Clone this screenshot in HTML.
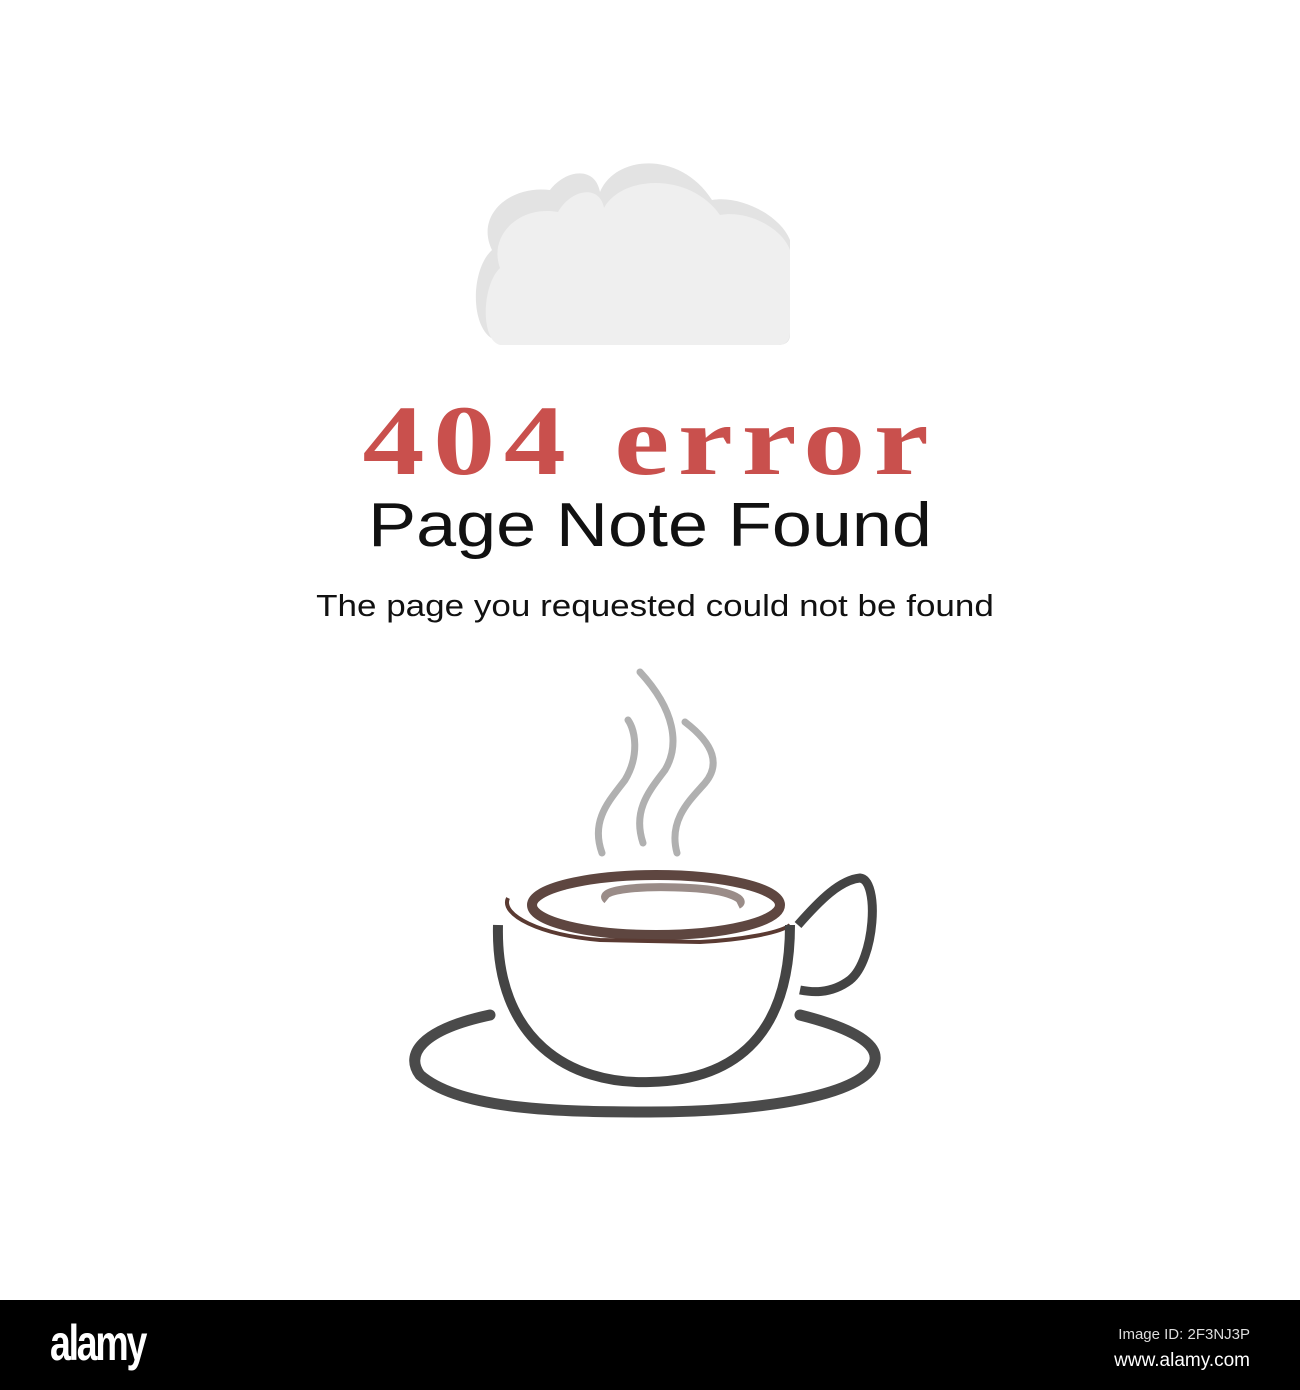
<!DOCTYPE html>
<html><head><style>
body{margin:0;width:1300px;height:1390px;background:#fff;position:relative;overflow:hidden;font-family:"Liberation Sans",sans-serif}
.t{position:absolute;left:0;width:1300px;text-align:center;white-space:nowrap}
</style></head><body>
<svg width="1300" height="1300" style="position:absolute;left:0;top:0">
<path d="M495,340 C470,330 470,270 492,250 C475,215 510,185 550,190 C565,170 595,165 600,192 C615,155 680,150 712,200 C740,195 780,215 790,240 L790,335 C790,342 785,345 778,345 L505,345 Z" fill="#e3e3e3"/>
<path d="M500,345 C480,340 482,285 500,268 C488,235 520,205 558,212 C572,188 600,185 604,208 C622,175 690,172 720,215 C748,210 782,228 790,250 L790,332 C790,341 785,345 778,345 Z" fill="#efefef"/>
<g fill="none" stroke="#b0b0b0" stroke-linecap="round">
<path d="M602,853 C590,820 610,800 625,780 C640,755 635,730 628,720" stroke-width="7"/>
<path d="M643,843 C632,810 650,790 665,770 C680,745 675,710 640,672" stroke-width="7"/>
<path d="M677,853 C668,820 690,800 705,783 C720,765 715,745 685,722" stroke-width="7"/>
</g>
<ellipse cx="656" cy="905" rx="124" ry="30" fill="none" stroke="#5e4640" stroke-width="10"/>
<path d="M607,900 C595,890 640,885 690,888 C730,890 748,900 738,905" fill="none" stroke="#9a8c88" stroke-width="8"/>
<path d="M508,898 C500,915 540,935 600,940 L700,942 C740,940 780,933 790,925" fill="none" stroke="#5a3a32" stroke-width="4"/>
<path d="M498,925 C495,1040 570,1085 650,1082 C740,1080 790,1030 790,925" fill="none" stroke="#444" stroke-width="10"/>
<path d="M798,925 C820,900 840,880 860,878 C880,880 875,960 850,980 C830,995 810,992 800,990" fill="none" stroke="#444" stroke-width="9"/>
<path d="M490,1015 C420,1030 405,1055 420,1075 C460,1110 560,1112 650,1112 C760,1112 870,1095 875,1060 C878,1040 840,1025 800,1015" fill="none" stroke="#4a4a4a" stroke-width="11" stroke-linecap="round"/>
</svg>
<div class="t" style="top:383px;font-family:'Liberation Serif',serif;font-weight:bold;font-size:100px;color:#c9504d;letter-spacing:7px;transform:scaleX(1.24)">404 error</div>
<div class="t" style="top:490px;font-size:62px;color:#111;transform:scaleX(1.16)">Page Note Found</div>
<div class="t" style="top:588px;left:5px;font-size:31px;color:#111;transform:scaleX(1.13)">The page you requested could not be found</div>
<div style="position:absolute;left:0;top:1300px;width:1300px;height:90px;background:#000">
<div style="position:absolute;left:50px;top:14px;color:#fff;font-weight:bold;font-size:50px;letter-spacing:-3px;transform:scaleX(0.75);transform-origin:left">alamy</div>
<div style="position:absolute;right:50px;top:22px;color:#ddd;font-size:15px;text-align:right;line-height:26px">Image ID: 2F3NJ3P<br><span style="font-size:19px;color:#fff">www.alamy.com</span></div>
</div>
</body></html>
